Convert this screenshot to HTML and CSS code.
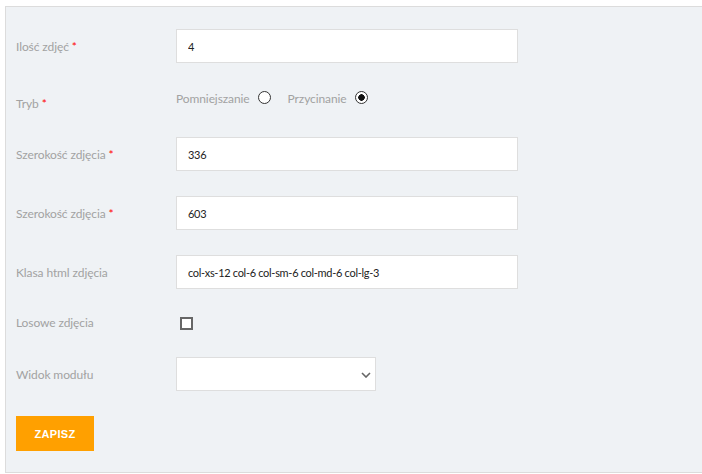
FILE: index.html
```html
<!DOCTYPE html>
<html>
<head>
	<title>Galeria - ustawienia</title>
	<link rel="stylesheet" href="styles.css">
</head>
<body>
	<div class="panel">
		<form class="settings">
			<div class="row">
				<label class="label">Ilość zdjęć <span class="req">*</span></label>
				<input class="field" type="text" value="4">
			</div>
			<div class="row row-radio">
				<label class="label">Tryb <span class="req">*</span></label>
				<div class="choices">
					<span class="choice">Pomniejszanie <input type="radio" name="mode" class="radio"></span>
					<span class="choice">Przycinanie <input type="radio" name="mode" class="radio" checked></span>
				</div>
			</div>
			<div class="row">
				<label class="label">Szerokość zdjęcia <span class="req">*</span></label>
				<input class="field" type="text" value="336">
			</div>
			<div class="row">
				<label class="label">Szerokość zdjęcia <span class="req">*</span></label>
				<input class="field" type="text" value="603">
			</div>
			<div class="row">
				<label class="label">Klasa html zdjęcia</label>
				<input class="field" type="text" value="col-xs-12 col-6 col-sm-6 col-md-6 col-lg-3">
			</div>
			<div class="row row-check">
				<label class="label">Losowe zdjęcia</label>
				<input type="checkbox" class="check">
			</div>
			<div class="row">
				<label class="label">Widok modułu</label>
				<div class="select-wrap">
					<select class="select"><option></option></select>
					<svg class="chevron" width="10" height="6" viewBox="0 0 10 6"><path d="M1 1 L5 5 L9 1" fill="none" stroke="#666" stroke-width="1.6"/></svg>
				</div>
			</div>
			<button type="button" class="save">ZAPISZ</button>
		</form>
	</div>
</body>
</html>
```

FILE: styles.css
```css
*{
	box-sizing: border-box;
}
body{
	margin: 0;
	font-family: Lato, "Liberation Sans", sans-serif;
	font-size: 12px;
	background-color: #fff;
}
.panel{
	margin: 6px 0 0 5px;
	background-color: #eff2f5;
	border: 1px solid #dcdcdc;
	border-right: none;
	padding: 22px 10px 21px 10px;
}
.row{
	display: flex;
	align-items: center;
	margin-bottom: 25px;
}
.label{
	width: 160px;
	flex-shrink: 0;
	color: #a2a2a2;
	line-height: 17px;
	letter-spacing: -0.1px;
}
.req{
	color: #ff0000;
}
.field{
	width: 342px;
	height: 34px;
	border: 1px solid #dedede;
	background-color: #fff;
	padding: 0 10px 0 11px;
	font-family: inherit;
	font-size: 11px;
	letter-spacing: -0.3px;
	color: #222;
	outline: none;
}
.row-radio{
	align-items: flex-start;
}
.row-radio .label{
	padding-top: 7px;
}
.choices{
	display: flex;
	gap: 17px;
	padding-top: 2px;
	line-height: 17px;
	color: #a2a2a2;
	letter-spacing: -0.1px;
}
.choice{
	display: flex;
	align-items: center;
	gap: 4px;
}
.radio{
	appearance: none;
	margin: 0 0 0 4px;
	width: 13px;
	height: 13px;
	border: 1.5px solid #333;
	border-radius: 50%;
	background-color: #fff;
	position: relative;
	top: -1px;
}
.radio:checked{
	background: radial-gradient(circle, #111 0, #111 3px, #fff 3.5px);
}
.row-check{
	align-items: flex-start;
	height: 18px;
}
.check{
	appearance: none;
	margin: 3px 0 0 4px;
	width: 13px;
	height: 13px;
	border: 2px solid #666;
	background-color: #fff;
}
.select-wrap{
	position: relative;
}
.select{
	appearance: none;
	display: block;
	width: 200px;
	height: 34px;
	border: 1px solid #dedede;
	background-color: #fff;
	outline: none;
}
.chevron{
	position: absolute;
	right: 5px;
	top: 15px;
}
.save{
	display: block;
	width: 78px;
	height: 35px;
	border: none;
	background-color: #ffa000;
	color: #fff;
	font-family: "Liberation Sans", sans-serif;
	font-weight: bold;
	font-size: 11px;
	letter-spacing: 0.3px;
	padding: 0;
}
```
